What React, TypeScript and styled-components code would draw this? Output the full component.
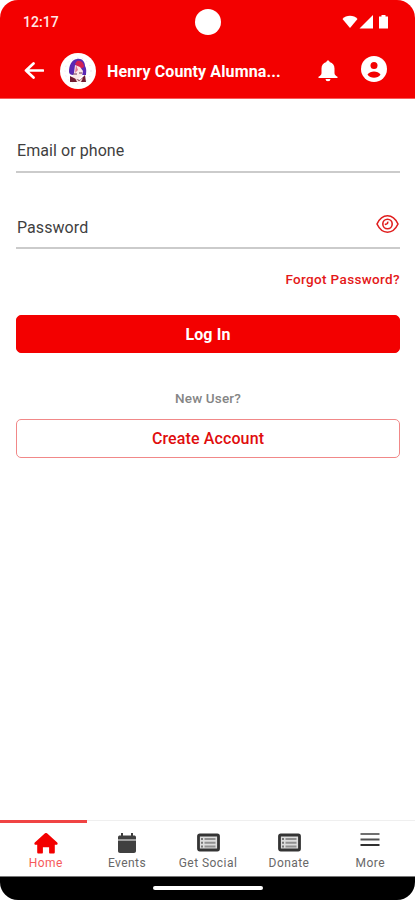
import React from "react";
import styled, { createGlobalStyle } from "styled-components";

const RED = "#f30000";

const GlobalStyle = createGlobalStyle`
  * { box-sizing: border-box; }
  html, body { margin: 0; padding: 0; background: #fff; }
  body { font-family: Roboto, "Liberation Sans", sans-serif; }
  button, input { font-family: inherit; }
`;

const Screen = styled.div`
  width: 415px;
  height: 900px;
  display: flex;
  flex-direction: column;
  overflow: hidden;
  border-radius: 18px;
  background: #fff;
`;

const Header = styled.header`
  height: 99px;
  flex: none;
  background: ${RED};
  border-bottom: 1px solid #f95a5a;
  color: #fff;
`;

const StatusBar = styled.div`
  height: 43px;
  display: grid;
  grid-template-columns: 1fr 26px 1fr;
  align-items: center;
  padding: 0 27px 0 23px;
`;

const Clock = styled.span`
  font-size: 14px;
  font-weight: 500;
  letter-spacing: 0.05px;
  color: #ffe9e6;
`;

const Camera = styled.span`
  width: 26px;
  height: 26px;
  margin-left: 2px;
  border-radius: 50%;
  background: #fff;
`;

const StatusIcons = styled.svg`
  justify-self: end;
  display: block;
`;

const AppBar = styled.div`
  height: 55px;
  display: flex;
  align-items: center;
  padding: 0 28px 0 24px;
`;

const IconButton = styled.button<{ $gap?: number; $lift?: number }>`
  display: flex;
  flex: none;
  padding: 0;
  margin: 0 0 ${(p) => p.$lift ?? 0}px ${(p) => p.$gap ?? 0}px;
  border: 0;
  background: none;
  color: inherit;
  svg { display: block; }
`;

const Logo = styled.svg`
  flex: none;
  margin-left: 16px;
  display: block;
`;

const Title = styled.h1`
  flex: 1;
  margin: 2px 0 0 11px;
  font-size: 16px;
  font-weight: 700;
  line-height: 20px;
  letter-spacing: 0.12px;
  white-space: nowrap;
`;

const Main = styled.main`
  flex: 1;
  display: flex;
  flex-direction: column;
  padding: 32px 15px 0 16px;
`;

const Field = styled.label`
  height: 42px;
  display: flex;
  align-items: center;
  flex: none;
  padding: 0 1px;
  border-bottom: 2px solid #cbcbcb;
  & + & { margin-top: 34px; }
`;

const FieldLabel = styled.span`
  flex: 1;
  font-size: 16px;
  line-height: 20px;
  letter-spacing: 0.07px;
  color: #3f3f3f;
  ${Field} + ${Field} > & { padding-top: 2px; }
`;

const ForgotLink = styled.a`
  align-self: flex-end;
  margin-top: 21px;
  font-size: 13.5px;
  font-weight: 500;
  line-height: 18px;
  letter-spacing: 0.35px;
  color: #e41818;
`;

const Button = styled.button<{ $outline?: boolean }>`
  height: ${(p) => (p.$outline ? 39 : 38)}px;
  flex: none;
  padding: 0;
  border-radius: 5px;
  border: 1px solid ${(p) => (p.$outline ? "#f18888" : RED)};
  background: ${(p) => (p.$outline ? "#fff" : RED)};
  color: ${(p) => (p.$outline ? "#e00d0d" : "#fff")};
  font-size: 16px;
  font-weight: ${(p) => (p.$outline ? 500 : 700)};
  letter-spacing: 0.12px;
`;

const LoginButton = styled(Button)`
  margin-top: 27px;
`;

const NewUser = styled.p`
  margin: 36px 0 12px;
  text-align: center;
  font-size: 13.5px;
  line-height: 18px;
  font-weight: 500;
  letter-spacing: 0.15px;
  color: #858585;
`;

const TabBar = styled.nav`
  height: 56px;
  flex: none;
  display: grid;
  grid-template-columns: 86.5px 81px 81px 81px 1fr;
`;

const Tab = styled.a<{ $active?: boolean }>`
  display: flex;
  flex-direction: column;
  align-items: center;
  border-top: ${(p) => (p.$active ? `3px solid #f04444` : "1px solid #efefef")};
  padding-top: ${(p) => (p.$active ? 10 : 12)}px;
  color: ${(p) => (p.$active ? RED : "#404040")};
  &:first-child { padding-left: 5px; }
  &:last-child { padding-right: 4px; }
  svg { display: block; }
`;

const TabLabel = styled.span<{ $active?: boolean }>`
  margin-top: 1px;
  font-size: 12px;
  line-height: 16px;
  letter-spacing: 0.45px;
  white-space: nowrap;
  color: ${(p) => (p.$active ? "#f65a5a" : "#686868")};
`;

const GestureBar = styled.div`
  height: 24px;
  flex: none;
  display: flex;
  justify-content: center;
  padding-top: 9px;
  border-top: 1px solid #777;
  background: #000;
  &::after {
    content: "";
    width: 110px;
    height: 4px;
    border-radius: 2px;
    background: #fff;
  }
`;

const BackIcon = () => (
  <svg width="20" height="18" viewBox="0 0 20 18" fill="none" stroke="currentColor" strokeWidth="2.7" strokeLinecap="round" strokeLinejoin="round">
    <path d="M9.500 1.500 2 8.500l7.500 7M2 8.500h17" />
  </svg>
);

const CrestLogo = () => (
  <Logo width="36" height="36" viewBox="0 0 36 36">
    <circle cx="18" cy="18" r="18" fill="#fff" />
    <circle cx="18" cy="18" r="13" fill="none" stroke="#d8d0e4" strokeWidth=".7" strokeDasharray="1 4" />
    <path d="M9 19c0-6 2-12 8-13 5-1 8 3 8 7 2 3 1 7 1 9H13c-2 0-4-1-4-3z" fill="#5a28b4" />
    <path d="M17 8c4-1 7 2 7 6l-4 2-5-5z" fill="#d32052" />
    <path d="m15 12 5 2 3 4-1 5-5 4-5-3 2-4z" fill="#fbe9ea" />
    <path d="m16 12 2 5-3 3z" fill="#e37890" />
    <path d="M13 21h4M19 20h3" stroke="#6a3456" strokeWidth="1" />
    <path d="m10 23 6 3 4 1 5-5 1 7H10z" fill="#701b31" />
    <path d="m15 25 4 3 4-3-2 4h-4z" fill="#f6dadd" />
  </Logo>
);

const BellIcon = () => (
  <svg width="20" height="22" viewBox="0 0 20 22" fill="currentColor">
    <path d="M10 .5c1 0 1.600.7 1.600 1.600C15 3 16.500 5.500 16.500 8.500V13c0 1.700 1 2.700 3 3.700V18H.5v-1.300c2-1 3-2 3-3.700V8.500c0-3 1.500-5.500 4.900-6.400C8.400 1.200 9 .5 10 .5zM7.500 19h5a2.500 2.300 0 0 1-5 0z" />
  </svg>
);

const AccountIcon = () => (
  <svg width="26" height="26" viewBox="0 0 26 26">
    <circle cx="13" cy="13" r="13" fill="currentColor" />
    <circle cx="13" cy="9.500" r="3.500" fill={RED} />
    <path d="M6.500 18.500c1.300-2 4-3 6.500-3s5.200 1 6.500 3c-1.300 2.100-4 3.300-6.500 3.300s-5.200-1.200-6.500-3.300z" fill={RED} />
  </svg>
);

const EyeIcon = () => (
  <svg width="23" height="20" viewBox="0 0 23 20" fill="none" stroke="#e01f1f" strokeWidth="1.600">
    <path d="M1 10c2.500-5.300 6-8.200 10.500-8.200S19.500 4.700 22 10c-2.500 5.300-6 8.200-10.500 8.200S3.500 15.300 1 10z" />
    <circle cx="11.500" cy="10" r="4.700" />
    <path d="M8.800 10.300c2 .2 3.200-.8 2.900-2.700" />
  </svg>
);

const HomeIcon = () => (
  <svg width="24" height="21" viewBox="0 0 24 21" fill="currentColor">
    <path d="M10.700.5a2 2 0 0 1 2.600 0l9.900 8.900c.8.800.4 2.300-.7 2.300h-1.700v7.500c0 .8-.5 1.300-1.300 1.300h-3.400c-.6 0-1-.4-1-1v-5.300H8.900v5.300c0 .6-.4 1-1 1H4.500c-.8 0-1.300-.5-1.300-1.300v-7.500H1.500c-1.100 0-1.500-1.500-.7-2.300z" />
  </svg>
);

const CalendarIcon = () => (
  <svg width="18" height="21" viewBox="0 0 18 21" fill="currentColor">
    <path d="M3 0h2v2.500h8V0h2v2.500h1c1.200 0 2 .7 2 1.700V6.500H0V4.200c0-1 .8-1.700 2-1.700h1zM0 7.500h18v10.500c0 1.200-.8 2-2 2H2c-1.200 0-2-.8-2-2z" />
  </svg>
);

const ListIcon = () => (
  <svg width="23" height="21" viewBox="0 0 23 21">
    <rect x="1.500" y="2" width="20" height="15" rx="1.200" fill="#ddd" stroke="#343434" strokeWidth="2.800" />
    <path d="M4 6h2M4 9.700h2M4 13.400h2" stroke="#777" strokeWidth="2" />
    <path d="M7.500 6h11M7.500 9.700h11M7.500 13.400h11" stroke="#909090" strokeWidth="2" />
  </svg>
);

const MenuIcon = () => (
  <svg width="20" height="21" viewBox="0 0 20 21" strokeWidth="2">
    <path d="M.5 1h19" stroke="#707070" />
    <path d="M.5 6.500h19" stroke="#505050" />
    <path d="M.5 12h19" stroke="#303030" />
  </svg>
);

const tabs = [
  { label: "Home", Icon: HomeIcon, active: true },
  { label: "Events", Icon: CalendarIcon },
  { label: "Get Social", Icon: ListIcon },
  { label: "Donate", Icon: ListIcon },
  { label: "More", Icon: MenuIcon },
];

export default function App() {
  return (
    <>
      <GlobalStyle />
      <Screen>
        <Header>
          <StatusBar>
            <Clock>12:17</Clock>
            <Camera />
            <StatusIcons width="46" height="14" viewBox="0 0 46 14" fill="#fff">
              <path d="M.5 4C4-.3 12-.3 15.500 4L8 13z" />
              <path d="M31 0v13.500H17.500z" />
              <path d="M39.500 0h4v1.500h2.500v12h-9V1.500h2.500z" />
            </StatusIcons>
          </StatusBar>
          <AppBar>
            <IconButton aria-label="Back"><BackIcon /></IconButton>
            <CrestLogo />
            <Title>Henry County Alumna...</Title>
            <IconButton aria-label="Notifications"><BellIcon /></IconButton>
            <IconButton aria-label="Account" $gap={23} $lift={4}><AccountIcon /></IconButton>
          </AppBar>
        </Header>
        <Main>
          <Field><FieldLabel>Email or phone</FieldLabel></Field>
          <Field>
            <FieldLabel>Password</FieldLabel>
            <IconButton aria-label="Show password" $lift={6}><EyeIcon /></IconButton>
          </Field>
          <ForgotLink>Forgot Password?</ForgotLink>
          <LoginButton>Log In</LoginButton>
          <NewUser>New User?</NewUser>
          <Button $outline>Create Account</Button>
        </Main>
        <TabBar>
          {tabs.map(({ label, Icon, active }) => (
            <Tab key={label} $active={active}>
              <Icon />
              <TabLabel $active={active}>{label}</TabLabel>
            </Tab>
          ))}
        </TabBar>
        <GestureBar />
      </Screen>
    </>
  );
}
